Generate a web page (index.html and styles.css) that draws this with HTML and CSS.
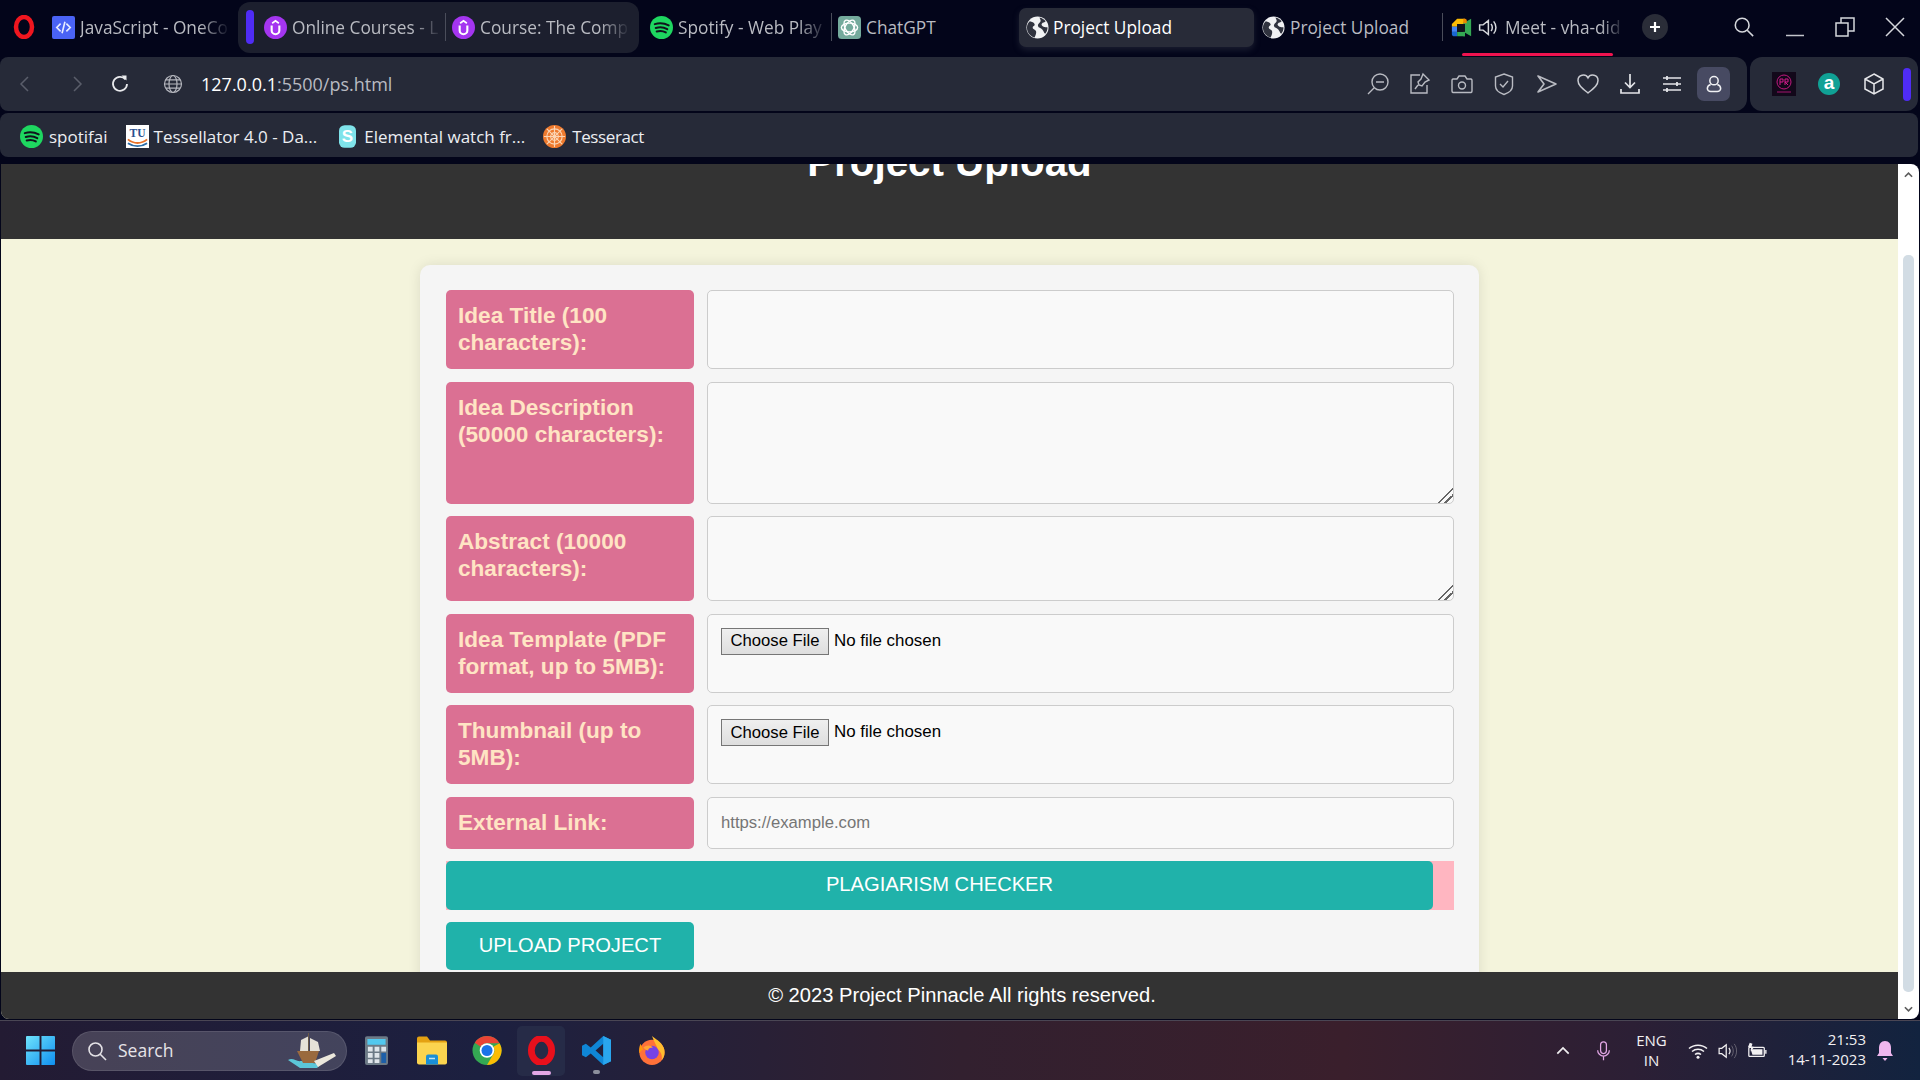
FILE: index.html
```html
<!DOCTYPE html>
<html lang="en">
<head>
    <meta charset="UTF-8">
    <meta name="viewport" content="width=device-width, initial-scale=1.0">
    <title>Project Upload</title>
    <link rel="stylesheet" href="styles.css">
</head>
<body>

<!-- shared icons -->
<svg class="defs" aria-hidden="true">
    <symbol id="i-udemy" viewBox="0 0 24 24">
        <circle cx="12" cy="12" r="12" fill="#a435f0"/>
        <path d="M8 10v5a4 4 0 0 0 8 0v-5" fill="none" stroke="#fff" stroke-width="2.2"/>
        <path d="M8.5 7.5 12 5l3.5 2.5" fill="none" stroke="#fff" stroke-width="1.8"/>
    </symbol>
    <symbol id="i-spotify" viewBox="0 0 24 24">
        <circle cx="12" cy="12" r="12" fill="#1ed760"/>
        <path d="M5 8.5c5-1.500 10-1 14.500 1.300M6 12.500c4-1.200 8.500-.8 12 1.200M7 16.200c3.300-.9 6.700-.6 9.500 1" fill="none" stroke="#10131c" stroke-width="2.1" stroke-linecap="round"/>
    </symbol>
    <symbol id="i-globe" viewBox="0 0 24 24">
        <circle cx="12" cy="12" r="11.5" fill="#f1f2f4"/>
        <path d="M4 5.500c2 .5 4.500 1 5 3 .5 2-2 1.500-2 3.500s3 2 3.500 4-.5 4-1.500 6.500C4 21 1 17 1 12c0-2.500 1.200-5 3-6.500zM14 1.500c3 .5 5 2 6.500 4-1 1.500-3 1-4 2.500s1 3 3 3.500c1 .3 2.500 0 3 .5 0 2.500-1 5-2.500 6.500-1.500-1-1.500-3-3-4.500s-4-1.500-4.500-3.500 1.500-3 2.500-4.500-.5-3-1-4.500z" fill="#30333f"/>
    </symbol>
</svg>

<div class="tabs">
    <svg class="opera-logo" viewBox="0 0 24 24"><ellipse cx="12" cy="12" rx="8" ry="10" fill="none" stroke="#f0161f" stroke-width="4.5"/></svg>

    <div class="tab tab-js">
        <svg class="tab-icon" viewBox="0 0 24 24"><rect width="24" height="24" rx="2" fill="#4a63f5"/><path d="M9 8l-4 4 4 4M15 8l4 4-4 4M13.500 6l-3 12" fill="none" stroke="#e8ecff" stroke-width="1.7"/></svg>
        <span class="tab-title fade">JavaScript - OneCo</span>
    </div>

    <div class="tab-group">
        <span class="group-mark"></span>
        <div class="tab">
            <svg class="tab-icon"><use href="#i-udemy"/></svg>
            <span class="tab-title fade">Online Courses - L</span>
        </div>
        <span class="tab-divider"></span>
        <div class="tab">
            <svg class="tab-icon"><use href="#i-udemy"/></svg>
            <span class="tab-title fade">Course: The Comp</span>
        </div>
    </div>

    <div class="tab tab-spotify">
        <svg class="tab-icon"><use href="#i-spotify"/></svg>
        <span class="tab-title fade">Spotify - Web Play</span>
    </div>
    <span class="tab-divider"></span>
    <div class="tab">
        <svg class="tab-icon" viewBox="0 0 24 24"><rect width="24" height="24" rx="4" fill="#74aa9c"/><g fill="none" stroke="#fff" stroke-width="1.4"><ellipse cx="12" cy="12" rx="8.5" ry="4.5"/><ellipse cx="12" cy="12" rx="8.5" ry="4.5" transform="rotate(60 12 12)"/><ellipse cx="12" cy="12" rx="8.5" ry="4.5" transform="rotate(120 12 12)"/></g></svg>
        <span class="tab-title chatgpt-title">ChatGPT</span>
    </div>

    <div class="tab tab-active">
        <svg class="tab-icon"><use href="#i-globe"/></svg>
        <span class="tab-title">Project Upload</span>
    </div>
    <div class="tab tab-upload2">
        <svg class="tab-icon"><use href="#i-globe"/></svg>
        <span class="tab-title">Project Upload</span>
    </div>
    <span class="tab-divider divider-meet"></span>
    <div class="tab tab-meet">
        <svg class="tab-icon" viewBox="0 0 24 24"><path d="M7 2h9v6H7v3H1V8z" fill="#fbbc04"/><path d="M1 11h6v6H1z" fill="#4285f4"/><path d="M1 17h6v5H4a3 3 0 0 1-3-3z" fill="#1967d2"/><path d="M7 17h9v5H7z" fill="#34a853"/><path d="M16 6l7-4v20l-7-4v4h-2V6z" fill="#34a853"/><path d="M7 8h9v9H7z" fill="#10131c"/><path d="M14 2h2a2 2 0 0 1 2 2v3h-4z" fill="#ea8600"/></svg>
        <svg class="speaker" viewBox="0 0 24 24"><path d="M3 9h4l6-5v16l-6-5H3zM16 8c2 2 2 6 0 8M19 5c3.500 4 3.500 10 0 14" fill="none" stroke="#d8dade" stroke-width="1.7"/></svg>
        <span class="tab-title fade">Meet - vha-did</span>
        <span class="meet-line"></span>
    </div>
    <span class="new-tab">
        <svg viewBox="0 0 12 12"><path d="M6 1v10M1 6h10" stroke="#fff" stroke-width="2.2"/></svg>
    </span>

    <div class="win-controls">
        <svg class="ctl ctl-search" viewBox="0 0 24 24"><circle cx="10" cy="10" r="7.5" fill="none" stroke="#d5d7dc" stroke-width="1.7"/><path d="M15.500 15.500 22 22" stroke="#d5d7dc" stroke-width="1.7"/></svg>
        <svg class="ctl ctl-min" viewBox="0 0 20 20"><path d="M1 18.500h18" stroke="#c3c5cb" stroke-width="1.5"/></svg>
        <svg class="ctl ctl-restore" viewBox="0 0 20 20"><path d="M1 6h12v13H1zM6 6V1h13v13h-6" fill="none" stroke="#d5d7dc" stroke-width="1.5"/></svg>
        <svg class="ctl ctl-close" viewBox="0 0 20 20"><path d="M1 1l18 18M19 1 1 19" stroke="#d5d7dc" stroke-width="1.5"/></svg>
    </div>
</div>

<div class="toolbar-row">
    <div class="address-bar">
        <svg class="nav nav-back" viewBox="0 0 20 20"><path d="M13 3 6 10l7 7" fill="none" stroke="#5a5e6b" stroke-width="1.5"/></svg>
        <svg class="nav nav-forward" viewBox="0 0 20 20"><path d="M7 3l7 7-7 7" fill="none" stroke="#5a5e6b" stroke-width="1.5"/></svg>
        <svg class="nav nav-reload" viewBox="0 0 20 20"><path d="M15.500 5.500A7 7 0 1 0 17 10" fill="none" stroke="#e8e9ec" stroke-width="1.8"/><path d="M11.500 1.500h5v5z" fill="#e8e9ec"/></svg>
        <svg class="nav nav-globe" viewBox="0 0 20 20"><g fill="none" stroke="#b5b7be" stroke-width="1.2"><circle cx="10" cy="10" r="8.5"/><ellipse cx="10" cy="10" rx="4" ry="8.5"/><path d="M1.500 10h17M2.700 5.800h14.600M2.700 14.200h14.600"/></g></svg>
        <div class="url"><span class="url-host">127.0.0.1</span>:5500/ps.html</div>

        <div class="tool-icons">
            <svg class="tool" viewBox="0 0 24 24"><circle cx="14" cy="10" r="8" fill="none" stroke="#b9bbc2" stroke-width="1.4"/><path d="M10 10h8M8 16l-6 6" stroke="#b9bbc2" stroke-width="1.4"/></svg>
            <svg class="tool" viewBox="0 0 24 24"><path d="M12 3H3v18h16v-8" fill="none" stroke="#b9bbc2" stroke-width="1.4"/><path d="M15 2l6 6-4 2-3 4-3-1-1-3 3-3zM10 13l-3 4" fill="none" stroke="#b9bbc2" stroke-width="1.4"/></svg>
            <svg class="tool" viewBox="0 0 24 24"><path d="M3 7h4l2-3h6l2 3h4a1.500 1.500 0 0 1 1 1.500V19a1.500 1.500 0 0 1-1 1.500H3A1.500 1.500 0 0 1 2 19V8.500A1.500 1.500 0 0 1 3 7z" fill="none" stroke="#b9bbc2" stroke-width="1.4"/><circle cx="12" cy="13.5" r="3.5" fill="none" stroke="#b9bbc2" stroke-width="1.4"/></svg>
            <svg class="tool" viewBox="0 0 24 24"><path d="M12 2l8.500 3v9c0 4-4 7-8.500 8.500C7.500 21 3.500 18 3.500 14V5z" fill="none" stroke="#b9bbc2" stroke-width="1.4"/><path d="M8 12l3 3 5-6" fill="none" stroke="#b9bbc2" stroke-width="1.4"/></svg>
            <svg class="tool" viewBox="0 0 24 24"><path d="M4 4l18 8-18 8 6-8z" fill="none" stroke="#b9bbc2" stroke-width="1.6" stroke-linejoin="round"/></svg>
            <svg class="tool" viewBox="0 0 24 24"><path d="M12 21C6 16 2 13 2 8.500A5.300 5.300 0 0 1 12 6a5.300 5.300 0 0 1 10 2.500C22 13 18 16 12 21z" fill="none" stroke="#c9cbd1" stroke-width="1.5"/></svg>
            <svg class="tool" viewBox="0 0 24 24"><path d="M12 2v13M7 10.500l5 5 5-5M3 17v4h18v-4" fill="none" stroke="#e3e4e8" stroke-width="1.7"/></svg>
            <svg class="tool" viewBox="0 0 24 24"><path d="M3 6h18M3 12h18M3 18h18" stroke="#e3e4e8" stroke-width="1.5"/><path d="M7 4v4M17 10v4M7 16v4" stroke="#e3e4e8" stroke-width="1.8"/></svg>
            <span class="profile">
                <svg viewBox="0 0 24 24"><circle cx="12" cy="8" r="5" fill="none" stroke="#f0f1f4" stroke-width="1.8"/><path d="M8 12.500c-3 1-4 3-4 5s2 3.500 4 3.500h8c2 0 4-1.500 4-3.500s-1-4-4-5" fill="none" stroke="#f0f1f4" stroke-width="1.8"/></svg>
            </span>
        </div>
    </div>

    <div class="ext-bar">
        <svg class="ext-thumb" viewBox="0 0 24 24"><rect width="24" height="24" fill="#12081a"/><circle cx="12" cy="10" r="7" fill="none" stroke="#c0187f" stroke-width="1"/><path d="M8 13V7h3v3H8M13 13V7h3v3h-3l3 3" fill="none" stroke="#d41a8c" stroke-width="1"/><path d="M5 20h14" stroke="#a3146e" stroke-width="1"/></svg>
        <span class="ext-amazon">a</span>
        <svg class="ext-cube" viewBox="0 0 24 24"><path d="M12 2l9 5v10l-9 5-9-5V7zM3 7l9 5 9-5M12 12v10" fill="none" stroke="#e6e7ea" stroke-width="1.5"/></svg>
        <span class="ext-mark"></span>
    </div>
</div>

<div class="bookmarks">
    <a class="bookmark bm-spotify">
        <svg class="bm-icon"><use href="#i-spotify"/></svg>spotifai
    </a>
    <a class="bookmark bm-tess">
        <svg class="bm-icon" viewBox="0 0 24 24"><rect width="24" height="24" fill="#fff"/><text x="12" y="12" text-anchor="middle" class="tu-text">TU</text><path d="M2 15c6 5 14 5 20 0" fill="none" stroke="#e8722a" stroke-width="2"/><path d="M2 19c6 4 14 4 20 0" fill="none" stroke="#2a6ca8" stroke-width="2"/></svg>Tessellator 4.0 - Da...
    </a>
    <a class="bookmark bm-elemental">
        <svg class="bm-icon bm-narrow" viewBox="0 0 18 24"><rect width="18" height="24" rx="6" fill="#7fe3ea"/><text x="9" y="18" text-anchor="middle" class="s-text">S</text></svg>Elemental watch fr...
    </a>
    <a class="bookmark bm-tesseract">
        <svg class="bm-icon" viewBox="0 0 24 24"><circle cx="12" cy="12" r="12" fill="#ee7a2e"/><g fill="none" stroke="#fbd5b5" stroke-width="1.2"><circle cx="12" cy="12" r="8"/><circle cx="12" cy="12" r="4"/><path d="M12 1v22M1 12h22M4 4l16 16M20 4 4 20"/></g></svg>Tesseract
    </a>
</div>

<div class="viewport">
    <div class="page">
        <header class="page-header">
            <h1>Project Upload</h1>
        </header>

        <main class="page-main">
            <form class="upload-card">
                <label class="field-label">Idea Title (100 characters):</label>
                <input class="field-box" type="text">

                <label class="field-label">Idea Description (50000 characters):</label>
                <textarea class="field-box"></textarea>

                <label class="field-label">Abstract (10000 characters):</label>
                <textarea class="field-box"></textarea>

                <label class="field-label">Idea Template (PDF format, up to 5MB):</label>
                <div class="field-box file-box">
                    <button type="button" class="choose-btn">Choose File</button>
                    <span class="file-name">No file chosen</span>
                </div>

                <label class="field-label">Thumbnail (up to 5MB):</label>
                <div class="field-box file-box">
                    <button type="button" class="choose-btn">Choose File</button>
                    <span class="file-name">No file chosen</span>
                </div>

                <label class="field-label link-label">External Link:</label>
                <input class="field-box link-input" type="url" placeholder="https://example.com">

                <div class="plag-wrap">
                    <button type="button" class="action-btn plag-btn">PLAGIARISM CHECKER</button>
                </div>

                <button type="button" class="action-btn">UPLOAD PROJECT</button>
            </form>
        </main>

        <footer class="page-footer">© 2023 Project Pinnacle All rights reserved.</footer>
    </div>

    <div class="scrollbar">
        <svg class="scroll-arrow" viewBox="0 0 10 6"><path d="M1 5l4-4 4 4" fill="none" stroke="#5c5c5c" stroke-width="1.8"/></svg>
        <div class="scroll-thumb"></div>
        <svg class="scroll-arrow arrow-down" viewBox="0 0 10 6"><path d="M1 1l4 4 4-4" fill="none" stroke="#5c5c5c" stroke-width="1.8"/></svg>
    </div>
</div>

<div class="taskbar">
    <svg class="win-logo" viewBox="0 0 30 30">
        <defs><linearGradient id="win-blue" x1="0" y1="0" x2="1" y2="1"><stop offset="0" stop-color="#6fe3fb"/><stop offset="1" stop-color="#0f8ff0"/></linearGradient></defs>
        <path d="M1 0h13v14H0V1a1 1 0 0 1 1-1zM16 0h13a1 1 0 0 1 1 1v13H16zM0 16h14v14H1a1 1 0 0 1-1-1zM16 16h14v13a1 1 0 0 1-1 1H16z" fill="url(#win-blue)"/>
    </svg>

    <div class="search-pill">
        <svg class="search-icon" viewBox="0 0 20 20"><circle cx="8.5" cy="8.5" r="6.5" fill="none" stroke="#e4e2e6" stroke-width="1.6"/><path d="M13 13l6 6" stroke="#e4e2e6" stroke-width="1.6"/></svg>
        <span class="search-text">Search</span>
        <svg class="search-ship" viewBox="0 0 50 36">
            <path d="M2 27c5-3 8 2 13 1s13 5 22 1l-6 6H14z" fill="#5cc6d8"/>
            <path d="M11 18h22l-4 12H17z" fill="#9a6a3e"/>
            <path d="M15 7l8-4v15h-9zM24 5l8 4 2 9H24z" fill="#e6e2d8"/>
            <path d="M22 0h1v18h-1z" fill="#6b5a48"/>
            <path d="M28 28l20-8 2 3-18 11z" fill="#ece8dc"/>
        </svg>
    </div>

    <div class="task-apps">
        <svg class="app app-calc" viewBox="0 0 24 30"><rect width="24" height="30" rx="2" fill="#6c7a86"/><rect x="2.5" y="3" width="19" height="6" fill="#52c8ee"/><path d="M3 11h5v5H3zM10 11h5v5h-5zM17 11h5v5h-5zM3 17.500h5v5H3zM10 17.500h5v5h-5zM3 24h5v4H3zM10 24h5v4h-5z" fill="#dfe5ea"/><path d="M17 17.500h5V28h-5z" fill="#1d5fa8"/></svg>
        <svg class="app app-folder" viewBox="0 0 30 28"><path d="M0 2a2 2 0 0 1 2-2h8l3 4h15a2 2 0 0 1 2 2v4H0z" fill="#e4a112"/><path d="M0 6h30v20a2 2 0 0 1-2 2H2a2 2 0 0 1-2-2z" fill="#fbd44f"/><path d="M9 20a2 2 0 0 1 2-2h8a2 2 0 0 1 2 2v8H9z" fill="#1a8fd6"/><path d="M12 22h6" stroke="#bfe4f8" stroke-width="1.5"/></svg>
        <svg class="app app-chrome" viewBox="0 0 30 30"><circle cx="15" cy="15" r="15" fill="#34a853"/><path d="M15 0a15 15 0 0 1 13 7.500H15a7.500 7.500 0 0 0-6.500 3.700L2.300 7A15 15 0 0 1 15 0z" fill="#ea4335"/><path d="M28 7.500A15 15 0 0 1 15 30l6.500-11.200A7.500 7.500 0 0 0 21.500 11z" fill="#fbbc04"/><circle cx="15" cy="15" r="7.5" fill="#fff"/><circle cx="15" cy="15" r="5.7" fill="#1a73e8"/></svg>
        <div class="app-active">
            <svg class="app app-opera" viewBox="0 0 30 30"><ellipse cx="15" cy="15" rx="10.5" ry="12.5" fill="none" stroke="#e8101c" stroke-width="7"/></svg>
            <span class="app-mark"></span>
        </div>
        <div class="app-vscode-wrap">
            <svg class="app app-vscode" viewBox="0 0 30 30"><path d="M22 0l8 4v22l-8 4-13-12-5 4-4-2V10l4-2 5 4zM22 8l-8 7 8 7z" fill="#0f86d6" fill-rule="evenodd"/><path d="M22 0l8 4v22l-8 4z" fill="#2aa6ee"/></svg>
            <span class="app-dot"></span>
        </div>
        <svg class="app app-firefox" viewBox="0 0 30 30"><circle cx="15" cy="17" r="13" fill="#ff7139"/><path d="M15 0c3 3 9 5 12 12 2 5 1 10-2 13 1-5-1-9-4-11-1-4-4-8-6-14z" fill="#ffbd2f"/><path d="M3 8c-1 3-2 6-1 10 1-2 2-3 4-4z" fill="#ff980e"/><circle cx="15" cy="17" r="7" fill="#7542e5"/><path d="M6 12c3-3 8-3 10 0-3 0-5 1-5 3-2 0-3-1-5-3z" fill="#ffa436"/></svg>
    </div>

    <div class="tray">
        <svg class="tray-chevron" viewBox="0 0 16 10"><path d="M1.500 8.500 8 2l6.500 6.500" fill="none" stroke="#f0eef0" stroke-width="2"/></svg>
        <svg class="tray-mic" viewBox="0 0 16 24"><rect x="4.5" y="1" width="7" height="14" rx="3.5" fill="none" stroke="#e3a7e6" stroke-width="1.5"/><path d="M1 11a7 7 0 0 0 14 0M8 18v5" fill="none" stroke="#e3a7e6" stroke-width="1.5"/></svg>
        <div class="tray-lang"><span>ENG</span><span>IN</span></div>
        <svg class="tray-wifi" viewBox="0 0 20 16"><path d="M1 5.500c5-4.500 13-4.500 18 0M4 8.500c3.500-3 8.500-3 12 0M7 11.500c2-1.500 4-1.500 6 0" fill="none" stroke="#f2f0f2" stroke-width="1.5"/><circle cx="10" cy="14.3" r="1.5" fill="#f2f0f2"/></svg>
        <svg class="tray-sound" viewBox="0 0 22 18"><path d="M1 6h3l5-4v14l-5-4H1z" fill="none" stroke="#f2f0f2" stroke-width="1.4"/><path d="M12 5.500c1.500 2 1.500 5 0 7" fill="none" stroke="#f2f0f2" stroke-width="1.3"/><path d="M15 3c2.500 3.500 2.500 8.500 0 12M18 1c3.500 4.500 3.500 11.500 0 16" fill="none" stroke="#6d6a78" stroke-width="1"/></svg>
        <svg class="tray-battery" viewBox="0 0 22 18"><path d="M3 5h15a1 1 0 0 1 1 1v8a1 1 0 0 1-1 1H3a1 1 0 0 1-1-1V6a1 1 0 0 1 1-1z" fill="none" stroke="#f2f0f2" stroke-width="1.4"/><path d="M4 7h13v6H6z" fill="#f2f0f2"/><path d="M20 8h1.500v4H20zM3 0l3 1-1 3 3 .5-4 5 .5-4L1 5z" fill="#f2f0f2"/></svg>
        <div class="tray-clock"><span>21:53</span><span>14-11-2023</span></div>
        <svg class="tray-bell" viewBox="0 0 16 20"><path d="M8 0c4 0 6 3 6 7v5l2 3H0l2-3V7c0-4 2-7 6-7z" fill="#efb6ee"/><path d="M5.500 17h5L8 20z" fill="#efb6ee"/></svg>
    </div>
</div>

</body>
</html>
```

FILE: styles.css
```css
/* browser window */
* {
    box-sizing: border-box;
}

html, body {
    margin: 0;
    height: 1080px;
    overflow: hidden;
}

body {
    background-color: #03051a;
    font-family: "Open Sans", "Noto Sans", sans-serif;
    color: #fff;
}

.defs {
    position: absolute;
    width: 0;
    height: 0;
}

/* tab strip */
.tabs {
    display: flex;
    align-items: center;
    height: 54px;
    margin-bottom: 3px;
    padding-left: 12px;
}

.opera-logo {
    width: 24px;
    height: 24px;
    flex: none;
}

.tab {
    display: flex;
    align-items: center;
    gap: 5px;
    flex: none;
    position: relative;
}

.tab-icon {
    width: 23px;
    height: 23px;
    flex: none;
}

.tab-title {
    width: 150px;
    margin-right: -3px;
    font-size: 17.3px;
    color: #b9bbc2;
    white-space: nowrap;
}

.fade {
    -webkit-mask-image: linear-gradient(to right, #000 80%, transparent);
    mask-image: linear-gradient(to right, #000 80%, transparent);
}

.tab-js {
    margin-left: 16px;
}

.tab-group {
    display: flex;
    align-items: center;
    height: 51px;
    margin-left: 11px;
    padding: 0 12px 0 8px;
    background-color: #1c1f2e;
    border-radius: 12px;
}

.group-mark {
    width: 8px;
    height: 34px;
    margin-right: 10px;
    background-color: #4f2cf5;
    border-radius: 4px;
}

.tab-divider {
    width: 1px;
    height: 28px;
    margin: 0 6px;
    background-color: #4a4d5a;
    flex: none;
}

.tab-spotify {
    margin-left: 11px;
}

.chatgpt-title {
    width: 76px;
    margin-right: 0;
}

.tab-active {
    width: 235px;
    height: 39px;
    margin-left: 77px;
    padding-left: 7px;
    gap: 4px;
    background-color: #282b38;
    border-radius: 7px;
    box-shadow: 0 3px 6px rgba(70, 74, 90, .35);
}

.tab-active .tab-title {
    color: #fff;
    width: 130px;
    margin-right: 0;
}

.tab-upload2 {
    margin-left: 8px;
}

.tab-upload2 .tab-title {
    width: 130px;
    margin-right: 0;
}

.divider-meet {
    margin: 0 8px 0 22px;
}

.tab-meet {
    gap: 5px;
}

.tab-meet .tab-icon {
    width: 21px;
    height: 21px;
}

.speaker {
    width: 21px;
    height: 21px;
}

.tab-meet .tab-title {
    width: 120px;
    margin: 0 0 0 2px;
}

.meet-line {
    position: absolute;
    left: 11px;
    top: 37px;
    width: 151px;
    height: 3px;
    background-color: #f0134f;
    border-radius: 2px;
}

.new-tab {
    display: flex;
    align-items: center;
    justify-content: center;
    width: 26px;
    height: 26px;
    margin-left: 17px;
    background-color: #2a2d38;
    border-radius: 50%;
    flex: none;
}

.new-tab svg {
    width: 12px;
    height: 12px;
}

.win-controls {
    display: flex;
    align-items: center;
    margin-left: 65px;
}

.ctl {
    flex: none;
    width: 20px;
    height: 20px;
}

.ctl-search {
    width: 22px;
    height: 22px;
}

.ctl-min {
    margin-left: 30px;
}

.ctl-restore {
    margin-left: 30px;
}

.ctl-close {
    margin-left: 30px;
}

/* address bar */
.toolbar-row {
    display: flex;
    height: 54px;
    margin-bottom: 2px;
}

.address-bar {
    display: flex;
    align-items: center;
    width: 1747px;
    padding-right: 17px;
    background-color: #262a38;
    border-radius: 8px 12px 12px 8px;
}

.nav {
    width: 20px;
    height: 20px;
    flex: none;
}

.nav-back {
    margin-left: 15px;
}

.nav-forward {
    margin-left: 32px;
}

.nav-reload {
    margin-left: 23px;
}

.nav-globe {
    margin-left: 33px;
}

.url {
    margin-left: 18px;
    font-size: 18px;
    color: #b9bbc2;
}

.url-host {
    color: #fff;
}

.tool-icons {
    display: flex;
    align-items: center;
    gap: 18px;
    margin-left: auto;
}

.tool {
    width: 24px;
    height: 24px;
}

.profile {
    display: flex;
    align-items: center;
    justify-content: center;
    width: 33px;
    height: 34px;
    margin-left: -5px;
    background-color: #474a62;
    border-radius: 7px;
}

.profile svg {
    width: 20px;
    height: 20px;
}

.ext-bar {
    display: flex;
    align-items: center;
    width: 168px;
    margin-left: 3px;
    padding-left: 22px;
    background-color: #262a38;
    border-radius: 12px;
}

.ext-thumb {
    width: 24px;
    height: 24px;
}

.ext-amazon {
    width: 22px;
    height: 22px;
    margin-left: 22px;
    background-color: #10a195;
    border-radius: 50%;
    font: bold 19px/20px "Liberation Sans", sans-serif;
    text-align: center;
}

.ext-cube {
    width: 24px;
    height: 24px;
    margin-left: 22px;
}

.ext-mark {
    width: 8px;
    height: 33px;
    margin-left: 17px;
    background-color: #4f2cf5;
    border-radius: 4px;
}

/* bookmarks */
.bookmarks {
    display: flex;
    align-items: center;
    width: 1918px;
    height: 44px;
    margin-bottom: 7px;
    padding-top: 2px;
    background-color: #262a38;
    border-radius: 8px;
}

.bookmark {
    display: flex;
    align-items: center;
    gap: 6px;
    font-size: 17px;
    color: #eceef2;
}

.bm-icon {
    width: 23px;
    height: 23px;
    flex: none;
}

.bm-narrow {
    width: 17px;
}

.bm-spotify {
    margin-left: 20px;
}

.bm-tess {
    margin-left: 18px;
    gap: 5px;
}

.bm-elemental {
    margin-left: 22px;
    gap: 8px;
}

.bm-tesseract {
    margin-left: 18px;
    letter-spacing: -.4px;
}

.tu-text {
    font: bold 12px "Liberation Serif", serif;
    fill: #2a4f8f;
}

.s-text {
    font: bold 18px "Liberation Sans", sans-serif;
    fill: #fff;
}

/* page */
.viewport {
    display: flex;
    height: 855px;
    margin: 0 1px 1px 1px;
}

.page {
    display: flex;
    flex-direction: column;
    width: 1897px;
    background-color: #f4f4dc;
    font-family: "Liberation Sans", Arial, sans-serif;
    border-radius: 0 0 0 8px;
    overflow: hidden;
}

.page-header {
    flex: none;
    height: 75px;
    background-color: #333;
    text-align: center;
    overflow: hidden;
}

/* scrolled down a bit, the title is cut off at the top */
.page-header h1 {
    margin: -24px 0 0;
    font-size: 40.3px;
    line-height: 46px;
}

.page-main {
    flex: 1;
    min-height: 0;
    overflow: hidden;
}

.upload-card {
    display: grid;
    grid-template-columns: 248px 747px;
    grid-template-rows: 79px 122px 85px 79px 79px 52px 48.5px 48px;
    column-gap: 13px;
    row-gap: 12.5px;
    width: 1059px;
    margin: 26px auto 0;
    padding: 25px 25px 60px 26px;
    background-color: #f5f5f5;
    border-radius: 10px;
    box-shadow: 0 0 13px rgba(0, 0, 0, .1);
}

.field-label {
    padding: 12px;
    background-color: #db7093;
    border-radius: 5px;
    color: #ffe4c4;
    font-size: 22.6px;
    font-weight: bold;
    line-height: 27px;
}

.field-box {
    display: block;
    width: 100%;
    height: 100%;
    padding: 13px;
    background-color: #f9f9f9;
    border: 1px solid #ccc;
    border-radius: 5px;
    font-family: "Liberation Sans", Arial, sans-serif;
    font-size: 16.67px;
    outline: none;
}

/* the grip is bigger at 125% zoom */
.field-box::-webkit-resizer {
    background: linear-gradient(135deg, transparent 48%, #666 48%, #666 56%, transparent 56%, transparent 70%, #666 70%, #666 78%, transparent 78%);
}

.file-box {
    display: flex;
    align-items: flex-start;
    color: #000;
}

.choose-btn {
    width: 108px;
    height: 27px;
    padding: 0;
    background: linear-gradient(#efefef, #dedede);
    border: 1px solid #767676;
    color: #000;
    font-family: "Liberation Sans", Arial, sans-serif;
    font-size: 16.67px;
    flex: none;
}

.file-name {
    margin-left: 5px;
    font-size: 16.9px;
    line-height: 25px;
}

.link-input::placeholder {
    color: #757575;
}

.plag-wrap {
    grid-column: 1 / 3;
    background-color: #ffb6c1;
}

.action-btn {
    display: block;
    width: 100%;
    height: 100%;
    padding: 0 0 1px;
    background-color: #20b2aa;
    border: none;
    border-radius: 5px;
    color: #fff;
    font-family: "Liberation Sans", Arial, sans-serif;
    font-size: 20.15px;
}

.plag-btn {
    width: 987px;
}

.page-footer {
    flex: none;
    height: 47px;
    padding-left: 25px;
    background-color: #333;
    font-size: 20.15px;
    line-height: 46px;
    text-align: center;
}

/* scrollbar */
.scrollbar {
    display: flex;
    flex-direction: column;
    align-items: center;
    width: 21px;
    background-color: #fff;
    border-radius: 0 8px 8px 0;
}

.scroll-arrow {
    width: 9px;
    height: 6px;
    margin-top: 8px;
    flex: none;
}

.scroll-thumb {
    width: 11px;
    height: 737px;
    margin-top: 77px;
    background-color: #d2dce4;
    border-radius: 5px;
    flex: none;
}

.arrow-down {
    margin-top: 14px;
}

/* taskbar */
.taskbar {
    display: flex;
    align-items: center;
    height: 60px;
    padding-left: 26px;
    background: linear-gradient(to right, #231b33 0%, #1c2040 25%, #32202f 50%, #3a1f2c 70%, #2c1f35 85%, #12233f 100%);
    border-top: 1px solid #4a4654;
}

.win-logo {
    width: 29px;
    height: 29px;
    flex: none;
}

.search-pill {
    display: flex;
    align-items: center;
    width: 275px;
    height: 40px;
    margin-left: 17px;
    padding-left: 14px;
    background-color: rgba(255, 255, 255, .17);
    border: 1px solid rgba(255, 255, 255, .1);
    border-radius: 20px;
    flex: none;
}

.search-icon {
    width: 20px;
    height: 20px;
}

.search-text {
    margin-left: 11px;
    padding-bottom: 2px;
    font-size: 17.5px;
    color: #e6e4e8;
}

.search-ship {
    width: 50px;
    height: 36px;
    margin-left: auto;
    margin-right: 10px;
}

.task-apps {
    display: flex;
    align-items: center;
    margin-left: 18px;
}

.app {
    width: 29px;
    height: 29px;
    flex: none;
    display: block;
}

.app-calc {
    width: 23px;
}

.app-folder {
    width: 30px;
    margin-left: 29px;
}

.app-chrome {
    width: 30px;
    margin-left: 25px;
}

.app-active {
    position: relative;
    display: flex;
    justify-content: center;
    align-items: center;
    width: 48px;
    height: 50px;
    margin-left: 15px;
    background-color: #262b47;
    border-radius: 5px;
}

.app-mark {
    position: absolute;
    left: 15px;
    bottom: 1px;
    width: 19px;
    height: 4px;
    background-color: #e3a7e6;
    border-radius: 2px;
}

.app-vscode-wrap {
    position: relative;
    margin-left: 17px;
}

.app-dot {
    position: absolute;
    left: 11px;
    top: 34px;
    width: 7px;
    height: 4px;
    background-color: #8c8f9c;
    border-radius: 2px;
}

.app-firefox {
    width: 30px;
    margin-left: 26px;
}

.tray {
    display: flex;
    align-items: center;
    margin-left: auto;
    padding-right: 27px;
    font-size: 15px;
    color: #f2f0f2;
}

.tray-chevron {
    width: 14px;
    height: 9px;
}

.tray-mic {
    width: 15px;
    height: 20px;
    margin-left: 26px;
}

.tray-lang {
    display: flex;
    flex-direction: column;
    align-items: center;
    gap: 1px;
    margin-left: 25px;
    line-height: 19px;
}

.tray-wifi {
    width: 20px;
    height: 16px;
    margin-left: 21px;
}

.tray-sound {
    width: 20px;
    height: 16px;
    margin-left: 10px;
}

.tray-battery {
    width: 20px;
    height: 18px;
    margin-left: 9px;
}

.tray-clock {
    display: flex;
    flex-direction: column;
    align-items: flex-end;
    gap: 1px;
    margin-left: 21px;
    padding-bottom: 2px;
    line-height: 19px;
}

.tray-bell {
    width: 16px;
    height: 20px;
    margin-left: 11px;
}
```
